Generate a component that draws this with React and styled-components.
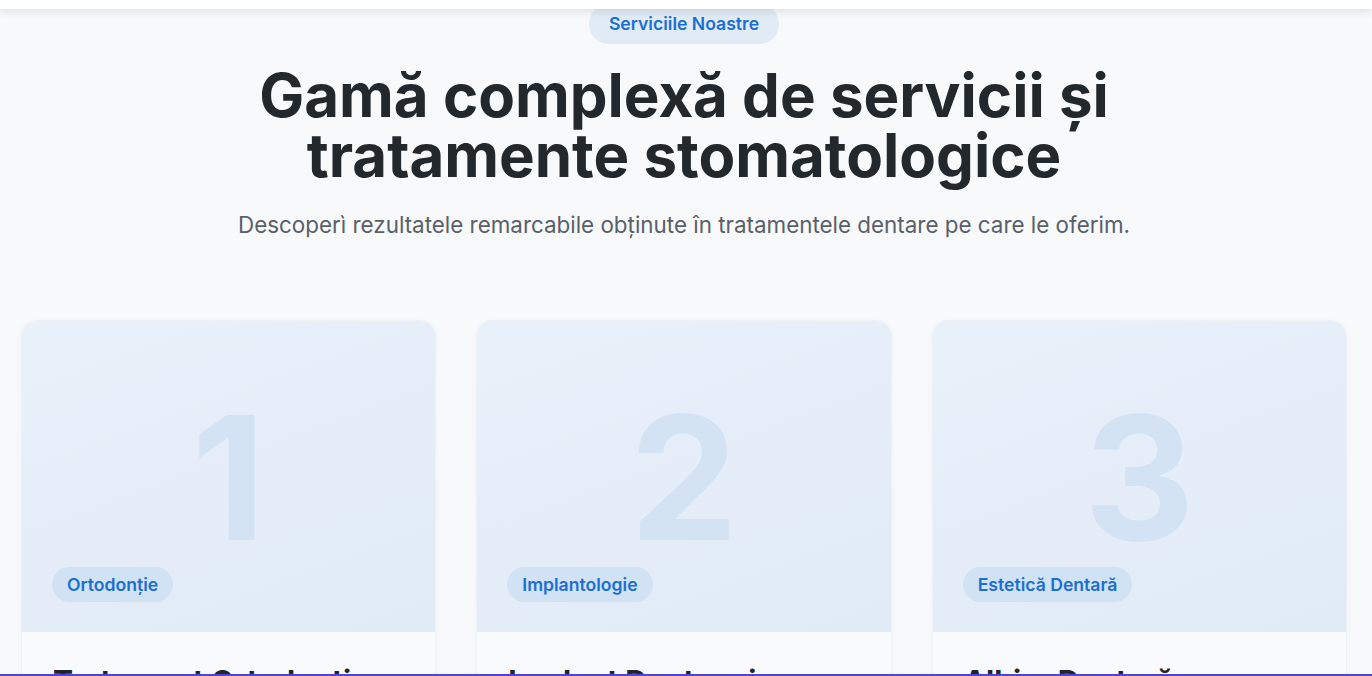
import React from "react";
import styled, { createGlobalStyle } from "styled-components";

const GlobalStyle = createGlobalStyle`
  * { box-sizing: border-box; }
  html, body { margin: 0; padding: 0; }
  body {
    background: #f8f9fb;
    font-family: Inter, "Noto Sans", "Liberation Sans", sans-serif;
    color: #212529;
    overflow: hidden;
  }
`;

const Header = styled.header`
  position: fixed;
  top: 0;
  left: 0;
  right: 0;
  height: 9px;
  background: #ffffff;
  box-shadow: 0 2px 10px rgba(0, 0, 0, 0.12);
  z-index: 10;
`;

const BottomLine = styled.div`
  position: fixed;
  left: 0;
  right: 0;
  bottom: 0;
  height: 2px;
  background: #5142d8;
  z-index: 10;
`;

const Section = styled.section`
  padding: 4px 25px 0 21px;
  display: flex;
  flex-direction: column;
  align-items: center;
`;

const Eyebrow = styled.span`
  display: inline-block;
  padding: 8px 20px;
  border-radius: 999px;
  background: #e0ebf6;
  color: #1b6fd3;
  font-size: 17.6px;
  line-height: 24px;
  font-weight: 600;
`;

const Title = styled.h2`
  margin: 21px 0 0;
  font-size: 60px;
  line-height: 60px;
  font-weight: 700;
  color: #23282d;
  text-align: center;
`;

const Subtitle = styled.p`
  margin: 24px 0 0;
  font-size: 22.4px;
  line-height: 32px;
  color: #596069;
  text-align: center;
`;

const Grid = styled.div`
  margin-top: 79px;
  width: 100%;
  display: grid;
  grid-template-columns: repeat(3, 1fr);
  gap: 40px;
`;

const Card = styled.article`
  border-radius: 16px;
  overflow: hidden;
  border: 1px solid #edf1f6;
  background: #f8fafc;
  box-shadow: 0 2px 8px rgba(30, 60, 110, 0.03);
`;

const Media = styled.div`
  position: relative;
  height: 311px;
  background: linear-gradient(160deg, #e9f1fa 0%, #e4edf8 55%, #e0ebf6 100%);
  display: flex;
  align-items: center;
  justify-content: center;
`;

const Number = styled.span`
  font-size: 172px;
  line-height: 1;
  font-weight: 700;
  color: #d3e3f4;
`;

const Tag = styled.span`
  position: absolute;
  left: 30px;
  bottom: 30px;
  padding: 6px 15px;
  border-radius: 999px;
  background: #d0e2f4;
  color: #1b6fd3;
  font-size: 17.6px;
  line-height: 23px;
  font-weight: 600;
`;

const Body = styled.div`
  padding: 30px 31px 30px;
`;

const CardTitle = styled.h3`
  margin: 0;
  font-size: 30px;
  line-height: 1.3;
  font-weight: 700;
  color: #212529;
`;

const services = [
  { n: "1", tag: "Ortodonție", title: "Tratament Ortodontic" },
  { n: "2", tag: "Implantologie", title: "Implant Dentar și Coroane" },
  { n: "3", tag: "Estetică Dentară", title: "Albire Dentară" },
];

export default function App() {
  return (
    <>
      <GlobalStyle />
      <Header />
      <Section>
        <Eyebrow>Serviciile Noastre</Eyebrow>
        <Title>
          Gamă complexă de servicii și
          <br />
          tratamente stomatologice
        </Title>
        <Subtitle>
          Descoperì rezultatele remarcabile obținute în tratamentele dentare pe care le oferim.
        </Subtitle>
        <Grid>
          {services.map((s) => (
            <Card key={s.n}>
              <Media>
                <Number>{s.n}</Number>
                <Tag>{s.tag}</Tag>
              </Media>
              <Body>
                <CardTitle>{s.title}</CardTitle>
              </Body>
            </Card>
          ))}
        </Grid>
      </Section>
      <BottomLine />
    </>
  );
}
